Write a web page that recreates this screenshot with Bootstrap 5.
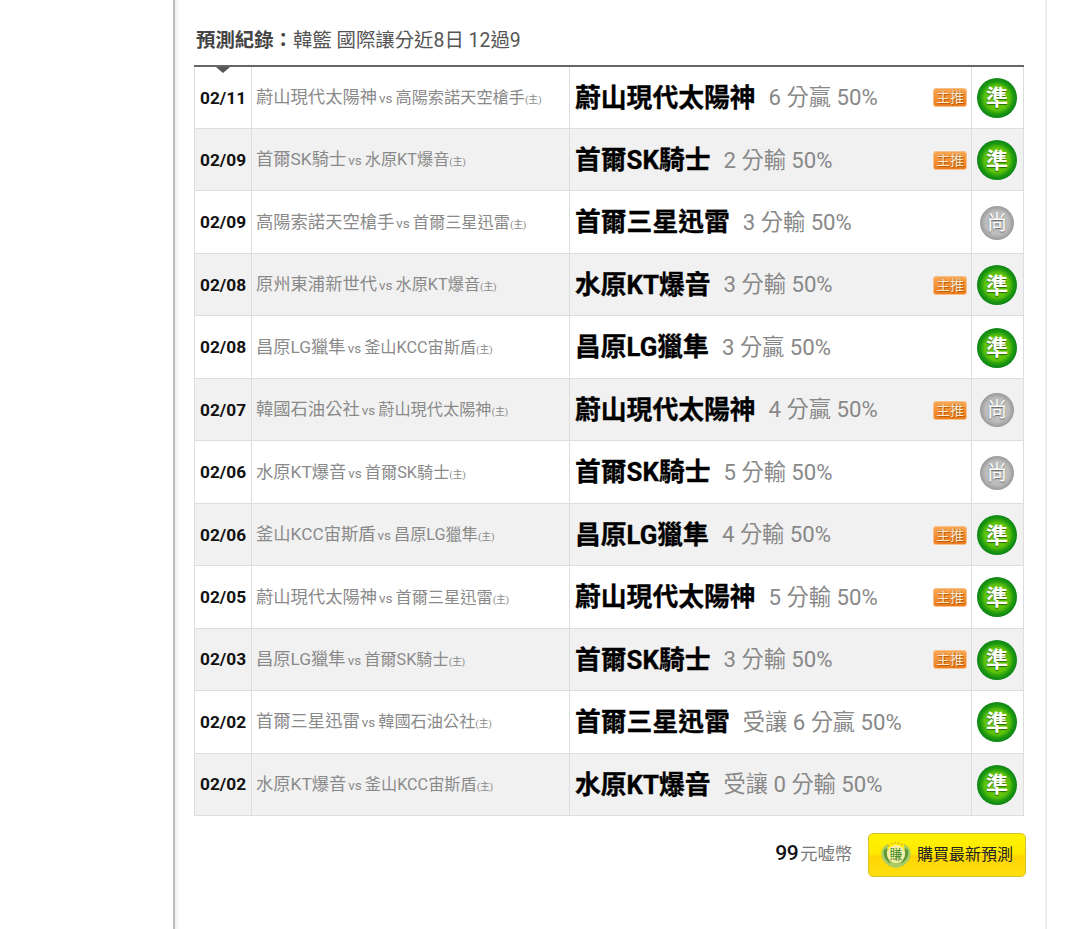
<!DOCTYPE html>
<html lang="zh-Hant">
<head>
<meta charset="utf-8">
<title>預測紀錄</title>
<link href="https://cdn.jsdelivr.net/npm/bootstrap@5.3.0/dist/css/bootstrap.min.css" rel="stylesheet">
<style>
html,body{height:100%;overflow:hidden}
body{font-family:Roboto,"Noto Sans CJK TC",sans-serif;background:#fff;color:#000}
.sheet{width:874px;height:929px;margin-left:173px;border-left:2px solid #bdbdbd;border-right:2px solid #eee;padding:28px 22px 0 19px;box-shadow:inset 5px 0 5px -4px #e4e4e4}
.rec-title{font-size:19.4px;font-weight:400;line-height:24px;color:#555;margin:0 0 13px 2px;height:24px;padding-top:1px}
.rec-title b{color:#444;font-weight:700}
.rec-wrap{position:relative;width:829px}
.rec-wrap::before{content:"";position:absolute;left:22px;top:2px;border:7px solid transparent;border-top:6px solid #555;border-bottom:0;z-index:2}
.rec{width:829px;table-layout:fixed;border-collapse:collapse;border-top:2px solid #666}
.rec td{border:1px solid #ddd;vertical-align:middle;height:62.47px}
.rec tr:nth-child(even) td{background:#f1f1f1}
.rec td.c-date{width:57px;padding:2px 0 0 5px;font-size:17.3px;font-weight:700;white-space:nowrap;color:#111}
.rec td.c-game{width:318px;padding:1px 0 0 4px;font-size:17.3px;color:#8a8a8a;white-space:nowrap}
.c-game i{font-style:normal;font-size:13.5px;margin:0 3px 0 2px}
.c-game u{text-decoration:none;font-size:16.2px}
.c-game s{text-decoration:none;font-size:9.8px}
.rec td.c-pick{width:402px;padding:1px 4px 0 5px;white-space:nowrap}
.pick-team{font-size:25.8px;font-weight:700;color:#000;margin-right:13px;-webkit-text-stroke:.3px #000}
.pick-odd{font-size:22.2px;color:#888}
.rec td.c-res{width:52px;padding:1px 1px 0 0;text-align:center}
.tag-main{width:34px;height:19px;border-radius:3px;background:linear-gradient(#f9a653,#ee7d1d);border:1px solid #f8c088;color:#ffe9cf;font-size:14px;line-height:16px;text-align:center;text-shadow:0 0 1px #a24b00,1px 1px 1px #b85a05}
.res-hit,.res-miss{display:inline-flex;align-items:center;justify-content:center;border-radius:50%;color:#fff;vertical-align:middle}
.res-hit{width:40px;height:40px;font-size:22px;font-weight:700;background:radial-gradient(circle closest-side at 50% 50%,#74d00a 0,#5cc20a 62%,#1f9a10 82%,#0b8414 100%);text-shadow:0 1px 1px #2a6a00}
.res-miss{width:34px;height:34px;font-size:20px;font-weight:400;background:radial-gradient(circle closest-side,#c9c9c9 0,#bbb 70%,#999 100%);text-shadow:0 1px 1px #666}
.buy-row{width:832px;margin-top:17px}
.fee{font-size:17.3px;color:#777;margin-right:16px;padding-bottom:2px}
.fee b{font-size:21px;font-weight:500;color:#111;letter-spacing:-.5px;margin-right:2px}
.buy-btn{width:158px;height:44px;border-radius:5px;border:1px solid #d6c22a;background:linear-gradient(#fff200 0,#ffe900 48%,#ffd500 52%,#ffe012 100%);color:#222;font-size:16px;padding:0 11px 0 10px;white-space:nowrap;gap:4px}
.buy-btn:hover{background:#ffe900;color:#222;border-color:#d6c22a}
.buy-ico{flex:none}
</style>
</head>
<body>
<div class="sheet">
<h2 class="rec-title"><b>預測紀錄：</b>韓籃 國際讓分近8日 12過9</h2>
<div class="rec-wrap">
<table class="rec">
<colgroup><col class="c-date"><col class="c-game"><col class="c-pick"><col class="c-res"></colgroup>
<tbody>
<tr><td class="c-date">02/11</td><td class="c-game">蔚山現代太陽神<i>vs</i><u>高陽索諾天空槍手</u><s>(主)</s></td><td class="c-pick"><div class="d-flex align-items-center"><span class="pick-team">蔚山現代太陽神</span><span class="pick-odd">6 分贏 50%</span><span class="tag-main ms-auto">主推</span></div></td><td class="c-res"><span class="res-hit">準</span></td></tr>
<tr><td class="c-date">02/09</td><td class="c-game">首爾SK騎士<i>vs</i><u>水原KT爆音</u><s>(主)</s></td><td class="c-pick"><div class="d-flex align-items-center"><span class="pick-team">首爾SK騎士</span><span class="pick-odd">2 分輸 50%</span><span class="tag-main ms-auto">主推</span></div></td><td class="c-res"><span class="res-hit">準</span></td></tr>
<tr><td class="c-date">02/09</td><td class="c-game">高陽索諾天空槍手<i>vs</i><u>首爾三星迅雷</u><s>(主)</s></td><td class="c-pick"><div class="d-flex align-items-center"><span class="pick-team">首爾三星迅雷</span><span class="pick-odd">3 分輸 50%</span></div></td><td class="c-res"><span class="res-miss">尚</span></td></tr>
<tr><td class="c-date">02/08</td><td class="c-game">原州東浦新世代<i>vs</i><u>水原KT爆音</u><s>(主)</s></td><td class="c-pick"><div class="d-flex align-items-center"><span class="pick-team">水原KT爆音</span><span class="pick-odd">3 分輸 50%</span><span class="tag-main ms-auto">主推</span></div></td><td class="c-res"><span class="res-hit">準</span></td></tr>
<tr><td class="c-date">02/08</td><td class="c-game">昌原LG獵隼<i>vs</i><u>釜山KCC宙斯盾</u><s>(主)</s></td><td class="c-pick"><div class="d-flex align-items-center"><span class="pick-team">昌原LG獵隼</span><span class="pick-odd">3 分贏 50%</span></div></td><td class="c-res"><span class="res-hit">準</span></td></tr>
<tr><td class="c-date">02/07</td><td class="c-game">韓國石油公社<i>vs</i><u>蔚山現代太陽神</u><s>(主)</s></td><td class="c-pick"><div class="d-flex align-items-center"><span class="pick-team">蔚山現代太陽神</span><span class="pick-odd">4 分贏 50%</span><span class="tag-main ms-auto">主推</span></div></td><td class="c-res"><span class="res-miss">尚</span></td></tr>
<tr><td class="c-date">02/06</td><td class="c-game">水原KT爆音<i>vs</i><u>首爾SK騎士</u><s>(主)</s></td><td class="c-pick"><div class="d-flex align-items-center"><span class="pick-team">首爾SK騎士</span><span class="pick-odd">5 分輸 50%</span></div></td><td class="c-res"><span class="res-miss">尚</span></td></tr>
<tr><td class="c-date">02/06</td><td class="c-game">釜山KCC宙斯盾<i>vs</i><u>昌原LG獵隼</u><s>(主)</s></td><td class="c-pick"><div class="d-flex align-items-center"><span class="pick-team">昌原LG獵隼</span><span class="pick-odd">4 分輸 50%</span><span class="tag-main ms-auto">主推</span></div></td><td class="c-res"><span class="res-hit">準</span></td></tr>
<tr><td class="c-date">02/05</td><td class="c-game">蔚山現代太陽神<i>vs</i><u>首爾三星迅雷</u><s>(主)</s></td><td class="c-pick"><div class="d-flex align-items-center"><span class="pick-team">蔚山現代太陽神</span><span class="pick-odd">5 分輸 50%</span><span class="tag-main ms-auto">主推</span></div></td><td class="c-res"><span class="res-hit">準</span></td></tr>
<tr><td class="c-date">02/03</td><td class="c-game">昌原LG獵隼<i>vs</i><u>首爾SK騎士</u><s>(主)</s></td><td class="c-pick"><div class="d-flex align-items-center"><span class="pick-team">首爾SK騎士</span><span class="pick-odd">3 分輸 50%</span><span class="tag-main ms-auto">主推</span></div></td><td class="c-res"><span class="res-hit">準</span></td></tr>
<tr><td class="c-date">02/02</td><td class="c-game">首爾三星迅雷<i>vs</i><u>韓國石油公社</u><s>(主)</s></td><td class="c-pick"><div class="d-flex align-items-center"><span class="pick-team">首爾三星迅雷</span><span class="pick-odd">受讓 6 分贏 50%</span></div></td><td class="c-res"><span class="res-hit">準</span></td></tr>
<tr><td class="c-date">02/02</td><td class="c-game">水原KT爆音<i>vs</i><u>釜山KCC宙斯盾</u><s>(主)</s></td><td class="c-pick"><div class="d-flex align-items-center"><span class="pick-team">水原KT爆音</span><span class="pick-odd">受讓 0 分輸 50%</span></div></td><td class="c-res"><span class="res-hit">準</span></td></tr>
</tbody>
</table>
</div>
<div class="buy-row d-flex justify-content-end align-items-center">
<span class="fee"><b>99</b>元嘘幣</span>
<a href="#" class="buy-btn btn d-flex align-items-center" role="button">
<svg class="buy-ico" width="34" height="28" viewBox="0 0 34 28"><path d="M9 3C3 6 1 11 3 17 5 22 10 26 17 27 24 26 29 22 31 17 33 11 31 6 25 3 26 12 24 20 17 21 10 20 8 12 9 3Z" fill="#a9cc64"/><path d="M5 9C4 14 6 19 12 23 9 18 7 14 8 7ZM29 9C30 14 28 19 22 23 25 18 27 14 26 7Z" fill="#5c9636"/><circle cx="17" cy="13" r="9" fill="#f8f0a8"/><path d="M9 5A12 12 0 0 1 25 5" fill="none" stroke="#c9a23a" stroke-width="1.2" stroke-dasharray="1.5 2"/><text x="17" y="18" font-size="13" text-anchor="middle" fill="#3c8a2a">賺</text></svg>
購買最新預測</a>
</div>
</div>
</body>
</html>
